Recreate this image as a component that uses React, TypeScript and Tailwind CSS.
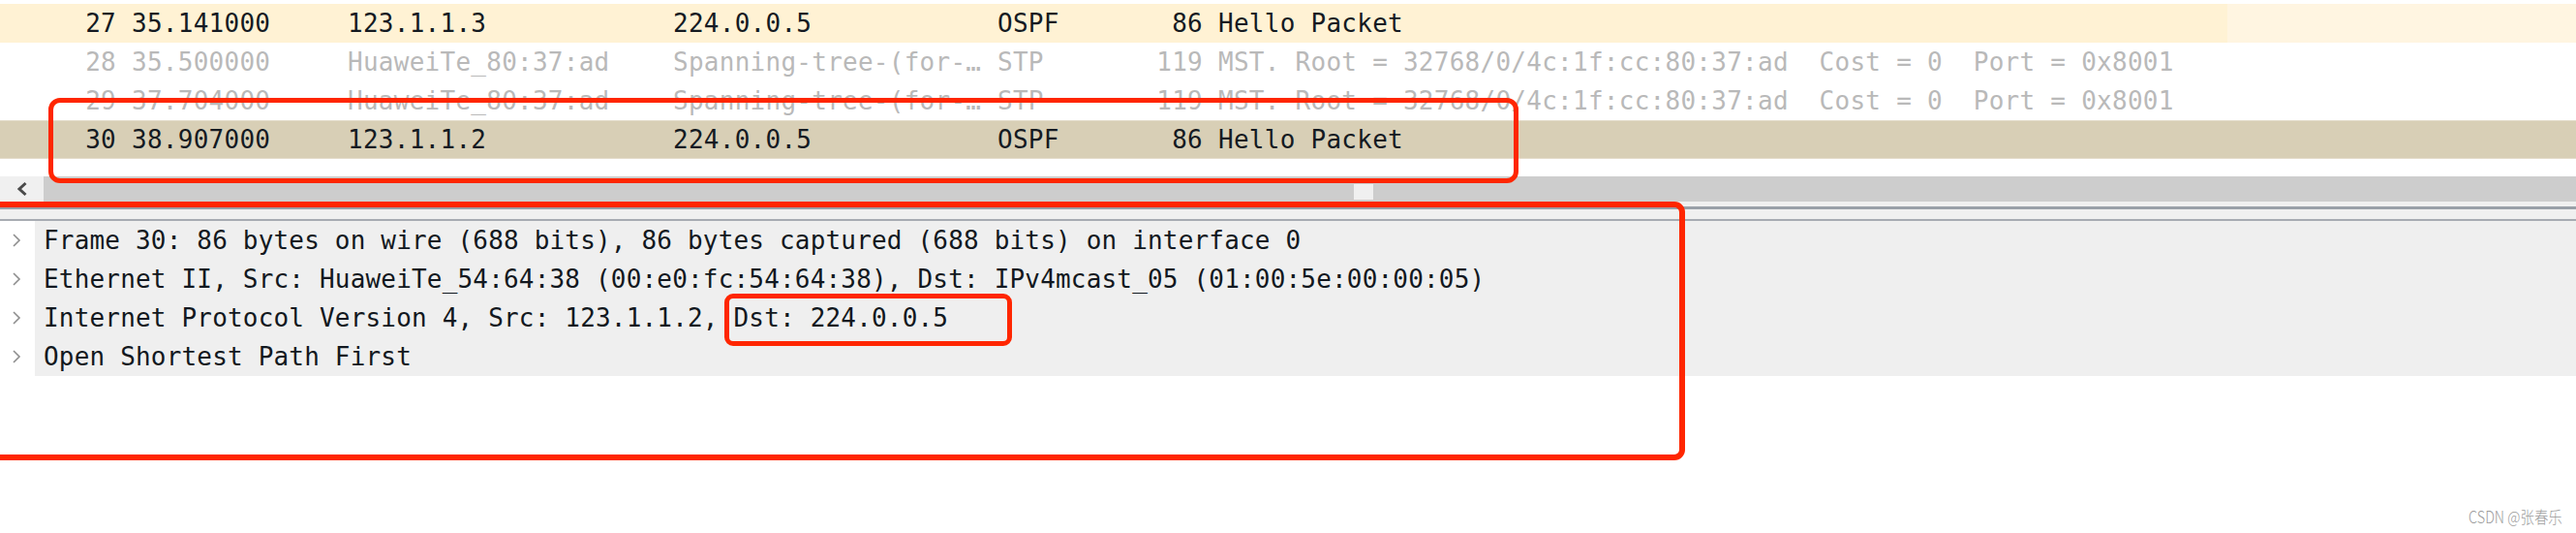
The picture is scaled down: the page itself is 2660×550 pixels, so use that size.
import React from "react";

type Pkt = {
  no: string;
  time: string;
  src: string;
  dst: string;
  proto: string;
  len: string;
  info: string;
  rowCls: string;
};

const packets: Pkt[] = [
  {
    no: "27",
    time: "35.141000",
    src: "123.1.1.3",
    dst: "224.0.0.5",
    proto: "OSPF",
    len: "86",
    info: "Hello Packet",
    rowCls: "bg-[linear-gradient(to_right,#fff2d4_2300px,#fff5e1_2300px)] text-[#141a22]",
  },
  {
    no: "28",
    time: "35.500000",
    src: "HuaweiTe_80:37:ad",
    dst: "Spanning-tree-(for-…",
    proto: "STP",
    len: "119",
    info: "MST. Root = 32768/0/4c:1f:cc:80:37:ad  Cost = 0  Port = 0x8001",
    rowCls: "bg-white text-[#b9b9b9]",
  },
  {
    no: "29",
    time: "37.704000",
    src: "HuaweiTe_80:37:ad",
    dst: "Spanning-tree-(for-…",
    proto: "STP",
    len: "119",
    info: "MST. Root = 32768/0/4c:1f:cc:80:37:ad  Cost = 0  Port = 0x8001",
    rowCls: "bg-white text-[#b9b9b9]",
  },
  {
    no: "30",
    time: "38.907000",
    src: "123.1.1.2",
    dst: "224.0.0.5",
    proto: "OSPF",
    len: "86",
    info: "Hello Packet",
    rowCls: "bg-[#d8cfb6] text-[#141a22] border-y border-[#e4dccb]",
  },
];

const details = [
  "Frame 30: 86 bytes on wire (688 bits), 86 bytes captured (688 bits) on interface 0",
  "Ethernet II, Src: HuaweiTe_54:64:38 (00:e0:fc:54:64:38), Dst: IPv4mcast_05 (01:00:5e:00:00:05)",
  "Internet Protocol Version 4, Src: 123.1.1.2, Dst: 224.0.0.5",
  "Open Shortest Path First",
];

function PacketRow({ p }: { p: Pkt }) {
  return (
    <div className={`flex h-[40px] items-center leading-[38px] whitespace-pre tracking-[0.26px] ${p.rowCls}`}>
      <div className="w-[120px] shrink-0 text-right">{p.no}</div>
      <div className="ml-[16px] w-[223px] shrink-0">{p.time}</div>
      <div className="w-[336px] shrink-0">{p.src}</div>
      <div className="w-[335px] shrink-0">{p.dst}</div>
      <div className="w-[150px] shrink-0">{p.proto}</div>
      <div className="w-[62px] shrink-0 text-right">{p.len}</div>
      <div className="ml-[16px]">{p.info}</div>
    </div>
  );
}

function DetailRow({ text }: { text: string }) {
  return (
    <div className="flex h-[40px] items-stretch">
      <div className="flex w-[36px] shrink-0 items-center bg-white pl-[12px]">
        <svg width="10" height="16" viewBox="0 0 10 16">
          <polyline points="2,2 8,8 2,14" fill="none" stroke="#8e8e8e" strokeWidth="1.6" />
        </svg>
      </div>
      <div className="flex flex-1 items-center whitespace-pre bg-[#efefef] pl-[9px] tracking-[0.18px] text-[#121820]">
        {text}
      </div>
    </div>
  );
}

export default function App() {
  return (
    <div className="relative h-[550px] w-[2660px] overflow-hidden bg-white font-['DejaVu_Sans_Mono',monospace] text-[26px]">
      {/* packet list */}
      <div className="pt-[4px]">
        {packets.map((p) => (
          <PacketRow key={p.no} p={p} />
        ))}
      </div>
      <div className="h-[18px] bg-white" />

      {/* horizontal scrollbar */}
      <div className="flex h-[26px]">
        <div className="flex w-[45px] shrink-0 items-center justify-center bg-[#f0f0f0]">
          <svg width="14" height="16" viewBox="0 0 14 16">
            <polyline points="10.5,2 4,8 10.5,14" fill="none" stroke="#4a4a4a" strokeWidth="3" />
          </svg>
        </div>
        <div className="w-[1353px] shrink-0 bg-[#cdcdcd]" />
        <div className="flex w-[20px] shrink-0 flex-col bg-[#cdcdcd] pt-[8px] pb-[2px]">
          <div className="flex-1 bg-[#f0f0f0]" />
        </div>
        <div className="flex-1 bg-[#cdcdcd]" />
      </div>

      {/* splitter */}
      <div className="flex h-[20px] flex-col bg-[#f0f0f0]">
        <div className="h-[5px]" />
        <div className="h-[3px] bg-[#9aa0a8]" />
        <div className="flex-1" />
        <div className="h-[2px] bg-[#a7abb2]" />
      </div>

      {/* packet details */}
      <div>
        {details.map((d) => (
          <DetailRow key={d} text={d} />
        ))}
      </div>

      {/* annotation boxes */}
      <div className="pointer-events-none absolute left-[50px] top-[101px] h-[88px] w-[1518px] rounded-[12px] border-[5px] border-[#ff2600]" />
      <div className="pointer-events-none absolute left-[-20px] top-[208px] h-[267px] w-[1760px] rounded-[11px] border-[6px] border-[#ff2600]" />
      <div className="pointer-events-none absolute left-[748px] top-[303px] h-[54px] w-[297px] rounded-[9px] border-[5px] border-[#ff2600]" />

      {/* watermark */}
      <div className="absolute bottom-[5px] right-[14px] origin-right scale-x-[0.85] font-['Noto_Sans_CJK_SC',sans-serif] text-[17px] font-light tracking-normal text-[#9c9c9c]">
        CSDN @张春乐
      </div>
    </div>
  );
}
